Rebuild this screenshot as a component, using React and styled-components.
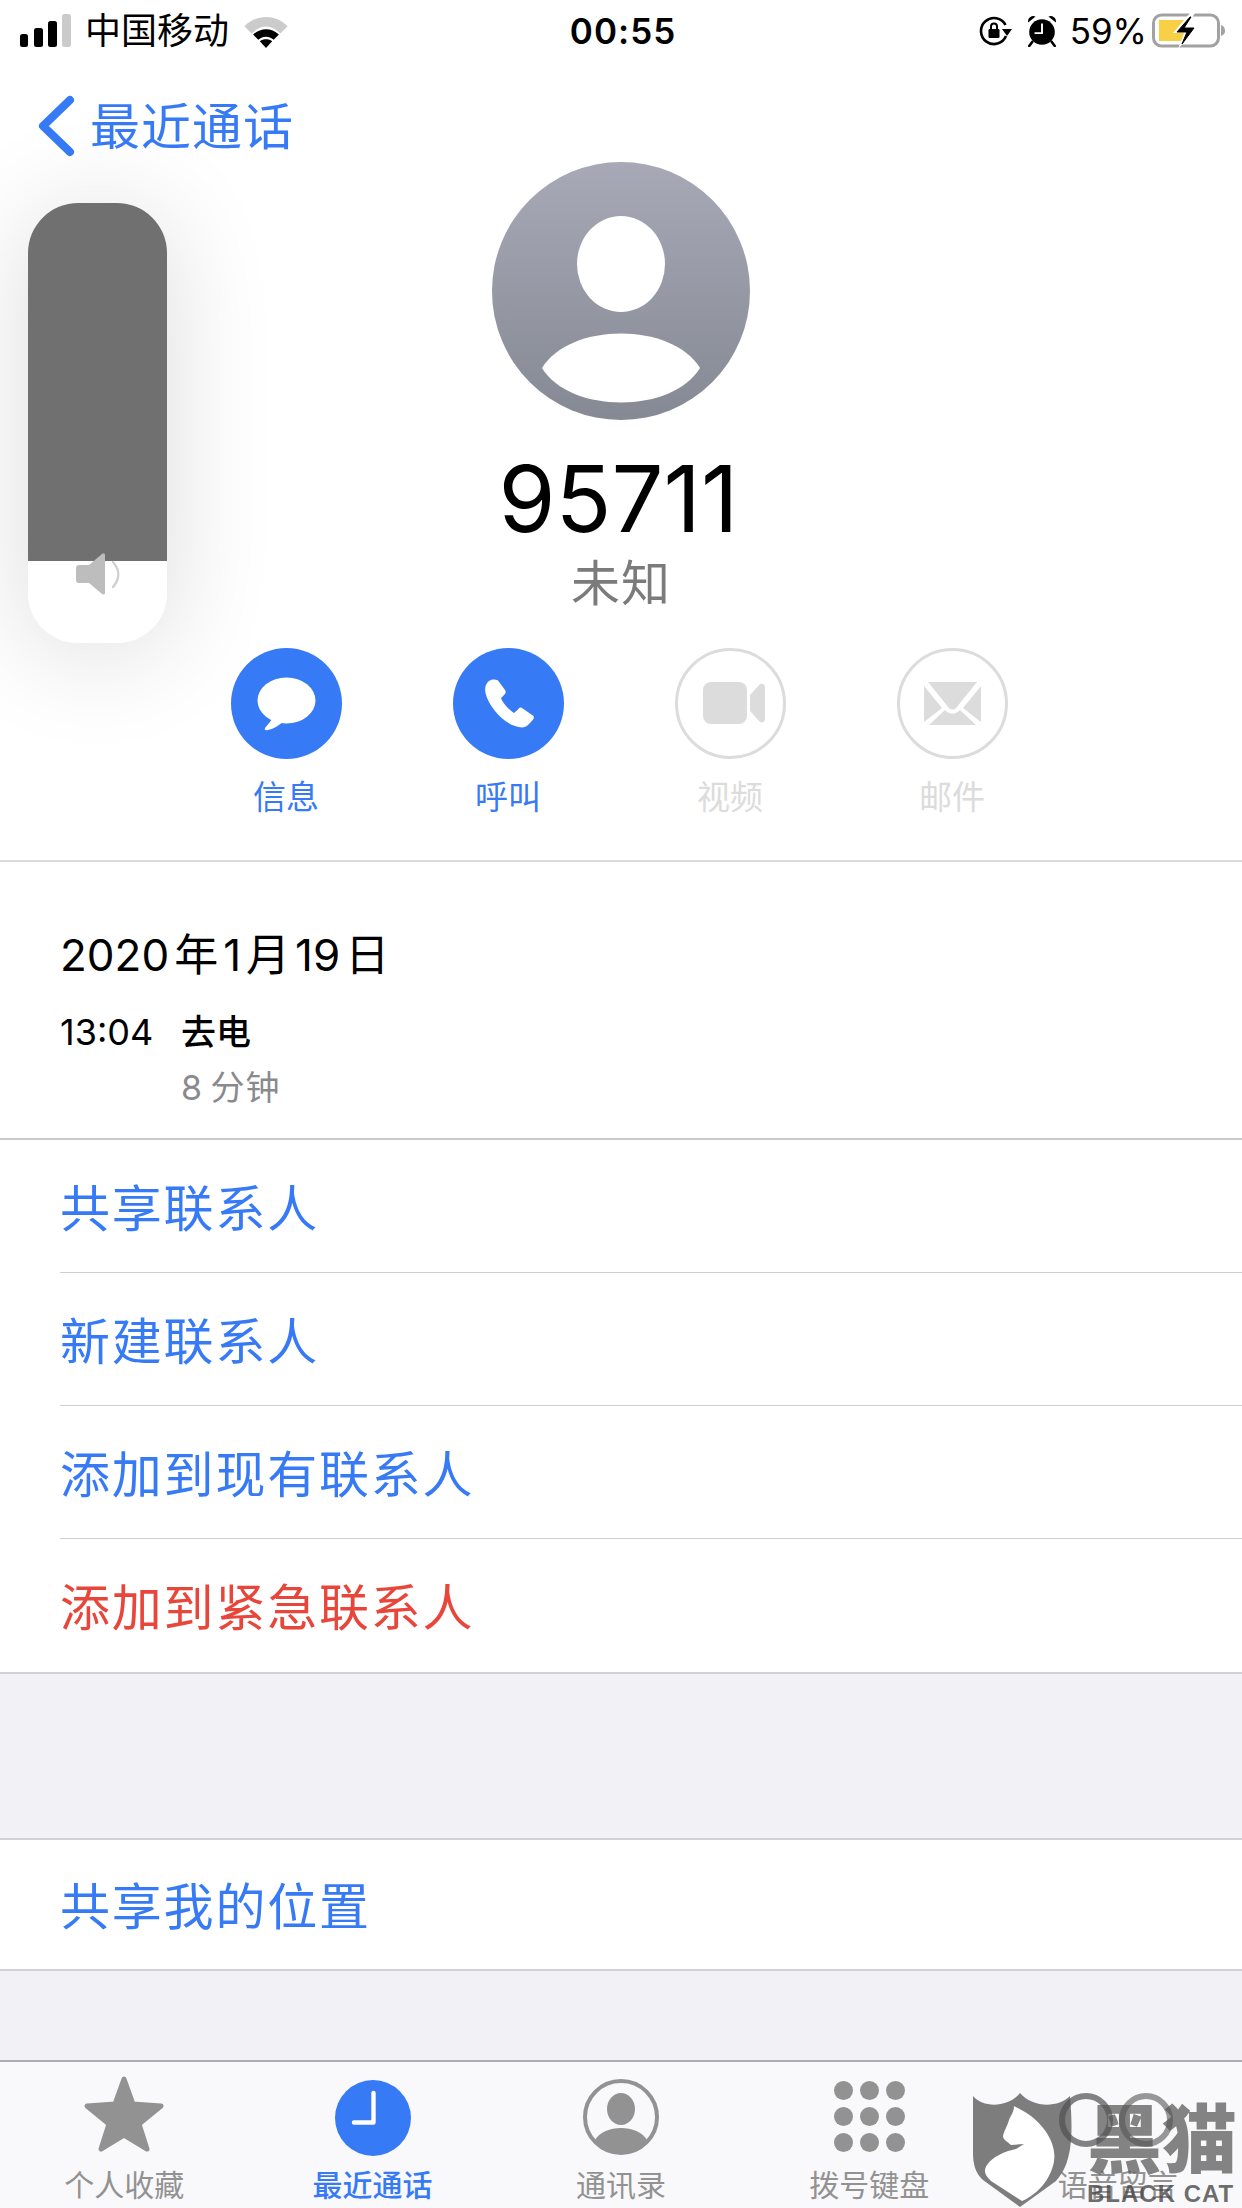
import React from 'react'
import styled, { createGlobalStyle } from 'styled-components'

const BLUE = '#377af6'
const RED = '#e8463a'
const MUTED = '#dcdcdc'
const TAB_GRAY = '#929292'

const Global = createGlobalStyle`
  html, body {
    margin: 0;
    padding: 0;
    background: #fff;
  }
  body {
    font-family: "Inter", "Noto Sans CJK SC", sans-serif;
  }
`

const Screen = styled.div`
  position: relative;
  width: 1242px;
  height: 2208px;
  overflow: hidden;
  background: #f1f1f6;
  display: flex;
  flex-direction: column;
  color: #000;
`

const Top = styled.div`
  background: #fff;
  height: 860px;
  border-bottom: 2px solid #dbdbde;
  box-sizing: content-box;
  display: flex;
  flex-direction: column;
`

const StatusBar = styled.div`
  height: 62px;
  display: grid;
  grid-template-columns: 1fr auto 1fr;
  align-items: center;
  padding: 0 16px 0 20px;
`
const StatusLeft = styled.div`
  display: flex;
  align-items: center;
`
const StatusRight = styled.div`
  display: flex;
  align-items: center;
  justify-content: flex-end;
`
const Carrier = styled.span`
  font-size: 36px;
  line-height: 44px;
  margin: 0 13px 0 14px;
`
const Clock = styled.span`
  font-size: 35px;
  font-weight: 600;
  letter-spacing: 1px;
`
const Percent = styled.span`
  font-size: 35px;
  margin: 0 5px 0 13px;
`
const Glyph = styled.svg`
  display: block;
  flex: none;
  margin-left: ${(p) => p.$ml || 0}px;
  margin-top: ${(p) => p.$mt || 0}px;
  margin-bottom: ${(p) => p.$mb || 0}px;
`

const Nav = styled.div`
  height: 100px;
  box-sizing: border-box;
  padding: 22px 0 0 38px;
  display: flex;
  align-items: center;
  color: ${BLUE};
  font-size: 50px;
  letter-spacing: 1px;
  gap: 15px;
`

const Header = styled.div`
  display: flex;
  flex-direction: column;
  align-items: center;
`
const PhoneNumber = styled.div`
  font-size: 92px;
  line-height: 110px;
  margin: 24px 5px 0 0;
  font-weight: 400;
`
const Unknown = styled.div`
  font-size: 49px;
  line-height: 60px;
  color: #7b7b7b;
  letter-spacing: 1px;
`

const Actions = styled.div`
  display: flex;
  padding-left: 175px;
  margin-top: 34px;
`
const Action = styled.div`
  width: 222px;
  display: flex;
  flex-direction: column;
  align-items: center;
  color: ${(p) => (p.$off ? MUTED : BLUE)};
  font-size: 33px;
  line-height: 44px;
  gap: 16px;
`
const Round = styled.div`
  width: 111px;
  height: 111px;
  border-radius: 50%;
  box-sizing: border-box;
  background: ${(p) => (p.$off ? '#fff' : BLUE)};
  border: ${(p) => (p.$off ? `3px solid ${MUTED}` : 'none')};
  display: flex;
  align-items: center;
  justify-content: center;
`

const History = styled.div`
  background: #fff;
  height: 278px;
  padding: 67px 0 0 60px;
  box-sizing: border-box;
  border-bottom: 2px solid #c9c9cc;
`
const DateLine = styled.div`
  font-size: 44px;
  line-height: 52px;
  word-spacing: -7.4px;
  white-space: pre;
`
const CallLine = styled.div`
  display: flex;
  margin-top: 29px;
  font-size: 35px;
  line-height: 44px;
`
const CallTime = styled.span`
  width: 121px;
  font-size: 36px;
`
const CallKind = styled.span`
  font-weight: 500;
`
const Duration = styled.div`
  margin: 12px 0 0 121px;
  font-size: 34px;
  line-height: 44px;
  color: #8a8a8e;
  letter-spacing: 1px;
  word-spacing: -3px;
`

const List = styled.div`
  background: #fff;
  padding-left: 60px;
  border-bottom: 2px solid #d2d2d6;
  margin-top: ${(p) => p.$mt || 0}px;
  border-top: ${(p) => (p.$topLine ? '2px solid #d2d2d6' : 'none')};
`
const Row = styled.div`
  height: ${(p) => p.$height || 133}px;
  box-sizing: border-box;
  padding-bottom: 3px;
  display: flex;
  align-items: center;
  font-size: 50px;
  letter-spacing: 1.8px;
  color: ${(p) => (p.$danger ? RED : BLUE)};
  border-bottom: ${(p) => (p.$last ? 'none' : '1px solid #cfcfd3')};
`

const TabBar = styled.div`
  position: absolute;
  left: 0;
  right: 0;
  bottom: 0;
  height: 148px;
  box-sizing: border-box;
  background: #f9f9fb;
  border-top: 2px solid #aeaeb2;
  display: flex;
`
const Tab = styled.div`
  width: 248.4px;
  display: flex;
  flex-direction: column;
  align-items: center;
  color: ${(p) => (p.$active ? BLUE : TAB_GRAY)};
  font-size: 30px;
  line-height: 36px;
  font-weight: ${(p) => (p.$active ? 500 : 400)};
`
const TabIcon = styled.div`
  height: 105px;
  display: flex;
  align-items: flex-end;
  justify-content: center;
  padding-bottom: 11px;
  box-sizing: border-box;
`
const Keypad = styled.div`
  display: grid;
  grid-template-columns: repeat(3, 19px);
  gap: 7px;
  margin-bottom: 4px;
`
const Dot = styled.span`
  width: 19px;
  height: 19px;
  border-radius: 50%;
  background: ${TAB_GRAY};
`

const Hud = styled.div`
  position: absolute;
  left: 28px;
  top: 203px;
  width: 139px;
  height: 440px;
  border-radius: 50px;
  background: #fff;
  overflow: hidden;
`
const HudShadow = styled.div`
  position: absolute;
  left: 28px;
  top: 203px;
  width: 139px;
  height: 440px;
  border-radius: 50px;
  box-shadow: 0 10px 110px rgba(0, 0, 0, 0.14);
`
const HudFill = styled.div`
  height: 358px;
  background: #707070;
`
const HudIcon = styled.svg`
  position: absolute;
  left: 48px;
  top: 349px;
`

const Watermark = styled.div`
  position: absolute;
  left: 973px;
  top: 2093px;
  width: 269px;
  height: 115px;
  pointer-events: none;
`
const MarkArt = styled.svg`
  position: absolute;
  left: 0;
  top: 0;
`
const MarkName = styled.div`
  position: absolute;
  left: 114px;
  top: 2px;
  font-size: 75px;
  line-height: 90px;
  font-weight: 900;
  white-space: nowrap;
  color: rgba(85, 85, 85, 0.72);
`
const MarkLatin = styled.div`
  position: absolute;
  left: 114px;
  top: 87px;
  font-family: "Liberation Sans", sans-serif;
  font-size: 24px;
  line-height: 28px;
  font-weight: 700;
  letter-spacing: 1px;
  white-space: nowrap;
  color: rgba(70, 70, 70, 0.78);
`

const Signal = () => (
  <Glyph width="51" height="34" viewBox="0 0 51 34">
    <rect x="0" y="20" width="8" height="13" rx="2.5" fill="#000" />
    <rect x="14" y="14" width="9" height="19" rx="2.5" fill="#000" />
    <rect x="28" y="7" width="9" height="26" rx="2.5" fill="#000" />
    <rect x="42" y="0" width="9" height="33" rx="2.5" fill="#cbcbcb" />
  </Glyph>
)

const Wifi = () => (
  <Glyph width="48" height="35" viewBox="0 0 46 34">
    <path d="M2 12 C14 0 32 0 44 12 L37 19 C28 10 18 10 9 19 Z" fill="#cbcbcb" />
    <path d="M10.5 20 C18 13 28 13 35.5 20 L30.5 25 C26 21 20 21 15.5 25 Z" fill="#000" />
    <path d="M17 26.5 C20.5 24 25.5 24 29 26.5 L23 33 Z" fill="#000" />
  </Glyph>
)

const RotationLock = () => (
  <Glyph width="33" height="30" viewBox="0 0 33 30">
    <path d="M27 20 A13 13 0 1 1 26.5 9" fill="none" stroke="#000" strokeWidth="2.6" />
    <path d="M23 13 L33 13 L28 20 Z" fill="#000" />
    <rect x="9.5" y="13" width="11" height="9" rx="1.2" fill="#000" />
    <path d="M12 13 V10.5 A3 3 0 0 1 18 10.5 V13" fill="none" stroke="#000" strokeWidth="2" />
  </Glyph>
)

const Alarm = () => (
  <Glyph $ml={15} width="30" height="32" viewBox="0 0 28 30">
    <circle cx="14" cy="16" r="12" fill="#000" />
    <path d="M1 7 A5 5 0 0 1 8 1.5 Z M27 7 A5 5 0 0 0 20 1.5 Z" fill="#000" />
    <path d="M5 25 L2 29 M23 25 L26 29" stroke="#000" strokeWidth="2.4" strokeLinecap="round" />
    <path d="M14 8 V17 H7" fill="none" stroke="#fff" strokeWidth="1.8" />
  </Glyph>
)

const Battery = () => (
  <Glyph width="74" height="36" viewBox="0 0 74 36">
    <rect x="1.5" y="2" width="65" height="31" rx="8" fill="none" stroke="#a2a2a2" strokeWidth="3" />
    <path d="M69 12 C72 13 73 15 73 18 C73 20 72 22 69 23 Z" fill="#a2a2a2" />
    <path d="M7 7 H34 V28 H7 Z" fill="#f8cf45" />
    <path d="M38 0 L21 20 H32 L26 36 L46 13 H35 L43 0 Z" fill="#fff" />
    <path d="M38 4 L25 19 H35 L30 31 L42 15 H32 L39 4 Z" fill="#000" stroke="#000" />
  </Glyph>
)

const Chevron = () => (
  <Glyph $mt={6} width="37" height="62" viewBox="0 0 37 62">
    <path d="M32 5 L5 31 L32 57" fill="none" stroke={BLUE} strokeWidth="8" strokeLinecap="round" strokeLinejoin="round" />
  </Glyph>
)

const Avatar = () => (
  <Glyph width="258" height="258" viewBox="0 0 258 258">
    <defs>
      <linearGradient id="avatarFill" x1="0" y1="0" x2="0" y2="1">
        <stop offset="0" stopColor="#a7aab6" />
        <stop offset="1" stopColor="#858994" />
      </linearGradient>
    </defs>
    <circle cx="129" cy="129" r="129" fill="url(#avatarFill)" />
    <ellipse cx="129" cy="102" rx="44" ry="48" fill="#fff" />
    <path d="M50 206 C78 160 180 160 208 206 C180 252 78 252 50 206 Z" fill="#fff" />
  </Glyph>
)

const MessageIcon = () => (
  <Glyph width="111" height="111" viewBox="0 0 111 111">
    <ellipse cx="55.5" cy="52.5" rx="29" ry="23" fill="#fff" />
    <path d="M42 70 L34 80 C33 82 35 82.5 37 82 C42 81 47 78 52 74 Z" fill="#fff" />
  </Glyph>
)

const PhoneIcon = () => (
  <Glyph width="111" height="111" viewBox="0 0 111 111">
    <path
      d="M40 31.5 C35 32 31 37 32.5 45 C35 57 49 74 62 78 C68 80 72 80 75 77 C78 74 82 71 80.5 68 L69 60 C67 59 66 60 65 61.5 L61 65 C56 62 49 54 48 50 L51.5 46.5 C53 45 53 43.5 52 42 L45 32.5 C43.5 31.5 42 31.5 40 31.5 Z"
      fill="#fff"
    />
  </Glyph>
)

const VideoIcon = () => (
  <Glyph width="105" height="105" viewBox="3 3 105 105">
    <rect x="28" y="34" width="44" height="42" rx="8" fill={MUTED} />
    <path d="M75 47 L85 36 C87 35 90 36 90 39 V71 C90 74 87 75 85 74 L75 63 Z" fill={MUTED} />
  </Glyph>
)

const MailIcon = () => (
  <Glyph width="105" height="105" viewBox="3 3 105 105">
    <path d="M31 34 H80 L59 60 C57 62 54 62 52 60 Z" fill={MUTED} />
    <path d="M27 38 L45 60 L27 74 Z" fill={MUTED} />
    <path d="M84 38 L66 60 L84 74 Z" fill={MUTED} />
    <path d="M32 77 L48 62 C53 67 58 67 63 62 L79 77 Z" fill={MUTED} />
  </Glyph>
)

const StarIcon = () => (
  <Glyph $mb={3} width="82" height="78" viewBox="0 0 82 78">
    <path
      d="M41 4 L50 29 L78 31 L56 49 L64 74 L41 60 L18 74 L26 49 L4 31 L32 29 Z"
      fill={TAB_GRAY}
      stroke={TAB_GRAY}
      strokeWidth="5"
      strokeLinejoin="round"
    />
  </Glyph>
)

const ClockIcon = () => (
  <Glyph width="76" height="76" viewBox="0 0 76 76">
    <circle cx="38" cy="38" r="38" fill={BLUE} />
    <path d="M38.5 13 V42.5 H19" fill="none" stroke="#fff" strokeWidth="4.4" strokeLinecap="round" strokeLinejoin="round" />
  </Glyph>
)

const ContactIcon = () => (
  <Glyph width="78" height="78" viewBox="0 0 78 78">
    <circle cx="39" cy="39" r="36" fill="none" stroke={TAB_GRAY} strokeWidth="4" />
    <ellipse cx="39" cy="31" rx="14" ry="16" fill={TAB_GRAY} />
    <path d="M13 62 C22 46 56 46 65 62 C58 71 49 76 39 76 C29 76 20 71 13 62 Z" fill={TAB_GRAY} />
  </Glyph>
)

const Speaker = () => (
  <HudIcon width="46" height="44" viewBox="0 0 46 44">
    <path d="M3 13 H13 L26 2 C28 1 29 2 29 3 V41 C29 42 28 43 26 42 L13 31 H3 C1 31 0 30 0 28 V16 C0 14 1 13 3 13 Z" fill="#bdbdbd" />
    <path d="M37 10 C44 18 44 27 37 35" fill="none" stroke="#cfcfcf" strokeWidth="2.4" strokeLinecap="round" />
  </HudIcon>
)

const MarkShield = () => (
  <MarkArt width="269" height="115" viewBox="0 0 269 115">
    <path
      d="M0 3 C10 15 35 15 47 0 C60 15 85 15 97 3 C100 40 100 70 83 88 L47 114 L10 87 C2 80 0 70 0 60 Z"
      fill="rgba(105, 105, 105, 0.86)"
    />
    <path
      d="M41 13 L52 19 C70 30 84 50 81 68 C79 82 68 100 49 108 L18 88 C12 82 10 78 14 72 C20 63 33 58 43 56 L51 51 L38 52 C34 48 30 47 30 43 C31 38 34 34 36 27 C38 22 41 19 41 13 Z"
      fill="#fff"
    />
    <circle cx="113" cy="27" r="24" fill="none" stroke="rgba(80, 80, 80, 0.7)" strokeWidth="6" />
    <circle cx="173" cy="27" r="24" fill="none" stroke="rgba(110, 110, 110, 0.7)" strokeWidth="6" />
  </MarkArt>
)

const ACTIONS = [
  { label: '信息', icon: <MessageIcon /> },
  { label: '呼叫', icon: <PhoneIcon /> },
  { label: '视频', icon: <VideoIcon />, off: true },
  { label: '邮件', icon: <MailIcon />, off: true },
]

const TABS = [
  { label: '个人收藏', icon: <StarIcon /> },
  { label: '最近通话', icon: <ClockIcon />, active: true },
  { label: '通讯录', icon: <ContactIcon /> },
  {
    label: '拨号键盘',
    icon: (
      <Keypad>
        {Array.from({ length: 9 }, (_, i) => (
          <Dot key={i} />
        ))}
      </Keypad>
    ),
  },
  { label: '语音留言', icon: null },
]

const App = () => {
  return (
    <Screen>
      <Global />
      <Top>
        <StatusBar>
          <StatusLeft>
            <Signal />
            <Carrier>中国移动</Carrier>
            <Wifi />
          </StatusLeft>
          <Clock>00:55</Clock>
          <StatusRight>
            <RotationLock />
            <Alarm />
            <Percent>59%</Percent>
            <Battery />
          </StatusRight>
        </StatusBar>
        <Nav>
          <Chevron />
          <span>最近通话</span>
        </Nav>
        <Header>
          <Avatar />
          <PhoneNumber>95711</PhoneNumber>
          <Unknown>未知</Unknown>
        </Header>
        <Actions>
          {ACTIONS.map((a) => (
            <Action key={a.label} $off={a.off}>
              <Round $off={a.off}>{a.icon}</Round>
              <span>{a.label}</span>
            </Action>
          ))}
        </Actions>
      </Top>
      <History>
        <DateLine>2020 年 1 月 19 日</DateLine>
        <CallLine>
          <CallTime>13:04</CallTime>
          <CallKind>去电</CallKind>
        </CallLine>
        <Duration>8 分钟</Duration>
      </History>
      <List>
        <Row>共享联系人</Row>
        <Row>新建联系人</Row>
        <Row>添加到现有联系人</Row>
        <Row $danger $last>添加到紧急联系人</Row>
      </List>
      <List $mt={164} $topLine>
        <Row $last $height={129}>共享我的位置</Row>
      </List>
      <TabBar>
        {TABS.map((t) => (
          <Tab key={t.label} $active={t.active}>
            <TabIcon>{t.icon}</TabIcon>
            <span>{t.label}</span>
          </Tab>
        ))}
      </TabBar>
      <HudShadow />
      <Hud>
        <HudFill />
        <Speaker />
      </Hud>
      <Watermark>
        <MarkShield />
        <MarkName>黑猫</MarkName>
        <MarkLatin>BLACK CAT</MarkLatin>
      </Watermark>
    </Screen>
  )
}

export default App
